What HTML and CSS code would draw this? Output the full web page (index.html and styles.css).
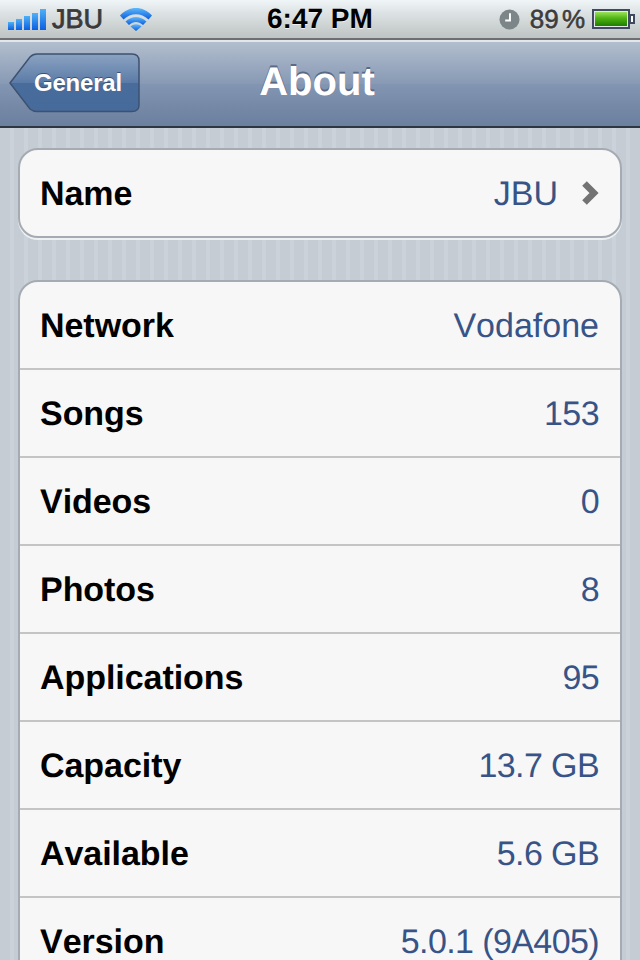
FILE: index.html
```html
<!DOCTYPE html>
<html lang="en">
<head>
<meta charset="utf-8">
<title>About</title>
<link rel="stylesheet" href="styles.css">
</head>
<body>
<div class="screen">
  <header class="status">
    <div class="status-left">
      <svg class="signal" viewBox="0 0 40 22" width="40" height="22">
        <defs><linearGradient id="sig" x1="0" y1="0" x2="0" y2="1"><stop offset="0" stop-color="#4fb0f8"/><stop offset="1" stop-color="#0a5fe0"/></linearGradient></defs>
        <rect x="0" y="14" width="6" height="8" fill="url(#sig)"/>
        <rect x="8" y="11" width="6" height="11" fill="url(#sig)"/>
        <rect x="16" y="8" width="6" height="14" fill="url(#sig)"/>
        <rect x="24" y="5" width="6" height="17" fill="url(#sig)"/>
        <rect x="32" y="1" width="6" height="21" fill="url(#sig)"/>
      </svg>
      <span class="carrier">JBU</span>
      <svg class="wifi" viewBox="0 0 32 24" width="32" height="24">
        <defs><linearGradient id="wf" x1="0" y1="0" x2="0" y2="1"><stop offset="0" stop-color="#5db8fa"/><stop offset="1" stop-color="#0a5de0"/></linearGradient></defs>
        <path d="M0 8.500 C9 -1.500 23 -1.500 32 8.500 L28.500 12.500 C21 5.500 11 5.500 3.500 12.500 Z" fill="url(#wf)"/>
        <path d="M5.500 14.500 C12 8.500 20 8.500 26.500 14.500 L23 18 C18.500 14 13.500 14 9 18 Z" fill="url(#wf)"/>
        <path d="M10.500 19.500 C14 16.500 18 16.500 21.500 19.500 L16 24 Z" fill="url(#wf)"/>
      </svg>
    </div>
    <div class="time">6:47 PM</div>
    <div class="status-right">
      <svg class="clock" viewBox="0 0 22 22" width="21" height="21">
        <circle cx="11" cy="11" r="10.500" fill="#7c8587"/>
        <path d="M11.500 4.500 V12 H6.500" fill="none" stroke="#fff" stroke-width="2"/>
      </svg>
      <span class="percent">89 %</span>
      <svg class="battery" viewBox="0 0 44 20" width="44" height="20">
        <defs><linearGradient id="bat" x1="0" y1="0" x2="0" y2="1"><stop offset="0" stop-color="#9be25a"/><stop offset="0.45" stop-color="#4fb312"/><stop offset="1" stop-color="#1e7d02"/></linearGradient></defs>
        <rect x="1" y="1" width="36" height="18" fill="#e4e8e8" stroke="#3f4a60" stroke-width="2"/>
        <rect x="3" y="3" width="32" height="14" fill="url(#bat)"/>
        <rect x="38" y="6" width="4" height="8" fill="#fff" stroke="#3f4a60" stroke-width="2"/>
      </svg>
    </div>
  </header>
  <nav class="navbar">
    <button class="back"><svg class="back-shape" viewBox="0 0 132 60" width="132" height="60"><defs><linearGradient id="bk" x1="0" y1="0" x2="0" y2="1"><stop offset="0" stop-color="#8ba3c2"/><stop offset="0.5" stop-color="#5b7ba7"/><stop offset="0.5" stop-color="#486c9c"/><stop offset="1" stop-color="#466a99"/></linearGradient></defs><path d="M1 30 L21 4 Q24 1 28 1 H123 Q130 1 130 8 V52 Q130 58.500 123 58.500 H28 Q24 58.500 21 56 Z" fill="url(#bk)" stroke="#3e5270" stroke-width="1.500"/></svg><span class="back-label">General</span></button>
    <h1 class="title">About</h1>
  </nav>
  <main class="content">
    <section class="group">
      <div class="row row-link">
        <span class="label">Name</span>
        <span class="value">JBU</span>
        <svg class="chevron" viewBox="0 0 18 26" width="18" height="26"><path d="M3.500 3.500 L13 13 L3.500 22.500" fill="none" stroke="#737373" stroke-width="6.500"/></svg>
      </div>
    </section>
    <section class="group">
      <div class="row"><span class="label">Network</span><span class="value">Vodafone</span></div>
      <div class="row"><span class="label">Songs</span><span class="value num">153</span></div>
      <div class="row"><span class="label">Videos</span><span class="value num">0</span></div>
      <div class="row"><span class="label">Photos</span><span class="value num">8</span></div>
      <div class="row"><span class="label">Applications</span><span class="value num">95</span></div>
      <div class="row"><span class="label">Capacity</span><span class="value num">13.7 GB</span></div>
      <div class="row"><span class="label">Available</span><span class="value num">5.6 GB</span></div>
      <div class="row"><span class="label">Version</span><span class="value num">5.0.1 (9A405)</span></div>
    </section>
  </main>
</div>
</body>
</html>
```
FILE: styles.css
```css
* { box-sizing: border-box; }
html, body { margin: 0; padding: 0; }
body { width: 640px; height: 960px; overflow: hidden; font-family: "Liberation Sans", Arial, sans-serif; text-rendering: geometricPrecision; font-kerning: none; }
.screen { width: 640px; height: 960px; overflow: hidden; display: flex; flex-direction: column; }

.status {
  flex: none; height: 40px; display: flex; align-items: center; justify-content: space-between;
  padding: 0 8px; position: relative;
  background: linear-gradient(#f0f5f8, #dfe4e6 30%, #c0c5c5 95%);
  border-bottom: 2px solid #6c6f72;
}
.status-left, .status-right { display: flex; align-items: center; }
.carrier { font-size: 27px; font-weight: 400; color: #3a3a3a; margin-left: 4px; -webkit-text-stroke: 0.8px #3a3a3a; text-shadow: 0 1px 0 #f0f3f3; }
.wifi { margin-left: 17px; }
.time { position: absolute; left: 267px; top: 3px; font-size: 28px; font-weight: 700; color: #000; line-height: 32px; text-shadow: 0 1px 0 #eef1f1; }
.status-right { margin-right: -4px; }
.percent { font-size: 26px; color: #3c3c3c; margin-left: 10px; -webkit-text-stroke: 0.6px #3c3c3c; text-shadow: 0 1px 0 #f0f3f3; word-spacing: -4px; }
.battery { margin-left: 7px; }

.navbar {
  flex: none; height: 88px; position: relative;
  display: flex; align-items: center; justify-content: center;
  background: linear-gradient(#b2bece, #8799b4 50%, #8295b1 50%, #6b7f9f);
  border-top: 2px solid #e3e7ea;
  border-bottom: 2px solid #2d3642;
}
.back { position: absolute; left: 9px; top: 11px; width: 132px; height: 60px; padding: 0; border: 0; background: none; }
.back-shape { position: absolute; left: 0; top: 0; }
.back-label { position: absolute; left: 25px; top: 16px; font: 700 24px/28px "Liberation Sans", Arial, sans-serif; letter-spacing: -0.2px; color: #fff; text-shadow: 0 -1px 0 #3a5070; }
.title { margin: -4px 6px 0 0; font-size: 40px; line-height: 46px; font-weight: 700; color: #fff; text-shadow: 0 -2px 0 #5a6a85; }

.content {
  flex: 1; padding: 20px 18px 0; display: flex; flex-direction: column; gap: 42px; overflow: hidden;
  background: repeating-linear-gradient(90deg, #c5ccd4 0 10px, #cbd2d9 10px 14px);
}
.group {
  flex: none; background: #f7f7f7; border: 2px solid #a5abb3; border-radius: 20px;
  box-shadow: 0 2px 0 #eef1f4;
}
.row {
  height: 88px; display: flex; align-items: center; justify-content: space-between;
  padding: 2px 21px 0 20px; border-bottom: 2px solid #c4c4c4;
}
.row:last-child { border-bottom: 0; height: 86px; }
.label { font-size: 34px; font-weight: 700; color: #000; letter-spacing: -0.05px; }
.value { font-size: 34px; color: #385487; }
.num { letter-spacing: -0.6px; }
.row-link { justify-content: flex-start; }
.row-link .value { margin-left: auto; }
.chevron { margin-left: 23px; margin-top: -2px; }
```
